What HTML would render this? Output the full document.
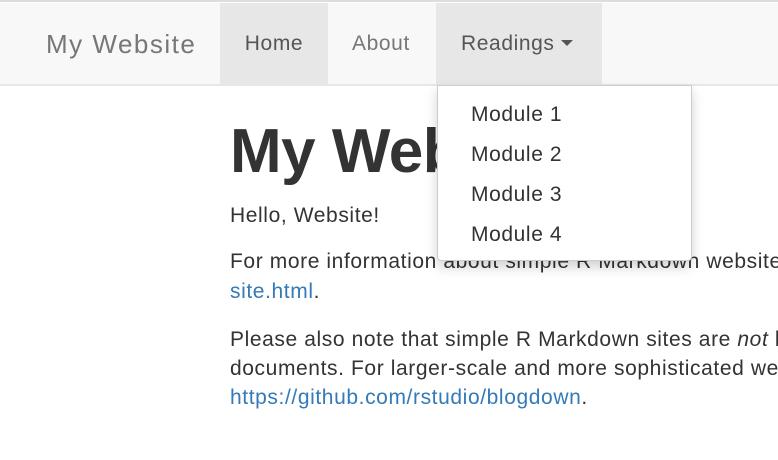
<!DOCTYPE html>
<html><head><style>
html,body{margin:0;width:778px;height:460px;overflow:hidden;background:#fff;font-family:"Liberation Sans",Arial,sans-serif;}
.wrap{position:absolute;left:0;top:0;width:778px;height:460px;overflow:hidden;}
.top{position:absolute;left:0;top:0;width:778px;height:2px;background:#ddd;}
.nav{position:absolute;left:0;top:3px;width:778px;height:81px;background:#f8f8f8;border-bottom:2px solid #e7e7e7;}
.ni{position:absolute;top:0;height:81px;line-height:82px;font-size:21px;letter-spacing:0.6px;color:#777;}
.brand{left:46px;font-size:26px;letter-spacing:1.5px;}
.act{background:#e7e7e7;color:#555;}
.caret{display:inline-block;width:0;height:0;border-left:6px solid transparent;border-right:6px solid transparent;border-top:6px solid #555;vertical-align:middle;margin-left:6px;margin-top:-2px;}
.t{position:absolute;left:230px;white-space:nowrap;font-size:21px;letter-spacing:0.6px;line-height:30px;color:#333;}
a{color:#337ab7;text-decoration:none;}
h1{position:absolute;left:230px;top:112px;margin:0;font-size:62px;letter-spacing:-0.5px;line-height:80px;color:#333;font-weight:bold;white-space:nowrap;}
.dd{position:absolute;left:437px;top:85px;width:253px;height:174px;background:#fff;border:1px solid #ccc;border-radius:0 0 4px 4px;box-shadow:0 6px 12px rgba(0,0,0,.18);}
.dd div{position:absolute;left:33px;font-size:21px;letter-spacing:0.6px;color:#333;line-height:30px;}
</style></head><body><div class="wrap">
<div class="top"></div>
<div class="nav">
<div class="ni brand">My Website</div>
<div class="ni act" style="left:220px;width:108px;text-align:center;">Home</div>
<div class="ni" style="left:352px;">About</div>
<div class="ni act" style="left:436px;width:166px;"><span style="margin-left:25px">Readings</span><span class="caret"></span></div>
</div>
<h1>My Website</h1>
<div class="t" style="top:201px">Hello, Website!</div>
<div class="t" style="top:247px">For more information about simple R Markdown websites, see</div>
<div class="t" style="top:277px"><a>site.html</a>.</div>
<div class="t" style="top:325px">Please also note that simple R Markdown sites are <i>not</i> blogs</div>
<div class="t" style="top:354px">documents. For larger-scale and more sophisticated websites</div>
<div class="t" style="top:383px"><a>https://github.com/rstudio/blogdown</a>.</div>
<div class="dd">
<div style="top:14px">Module 1</div>
<div style="top:54px">Module 2</div>
<div style="top:94px">Module 3</div>
<div style="top:134px">Module 4</div>
</div>
</div></body></html>
